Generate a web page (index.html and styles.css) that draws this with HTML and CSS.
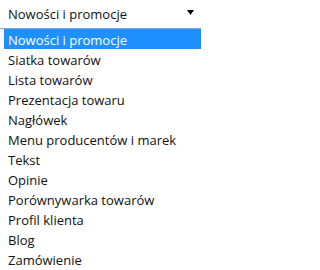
FILE: index.html
```html
<!DOCTYPE html>
<html lang="pl">
<head>
<meta charset="utf-8">
<link rel="stylesheet" href="styles.css">
</head>
<body>
<div class="page">
  <div class="select">
    <span class="value">Nowości i promocje</span>
    <svg class="arrow" width="7" height="5" viewBox="0 0 7 5"><path d="M0 0H7L3.5 5Z" fill="#000"/></svg>
  </div>
  <ul class="list">
    <li class="opt selected">Nowości i promocje</li>
    <li class="opt">Siatka towarów</li>
    <li class="opt">Lista towarów</li>
    <li class="opt">Prezentacja towaru</li>
    <li class="opt">Nagłówek</li>
    <li class="opt">Menu producentów i marek</li>
    <li class="opt">Tekst</li>
    <li class="opt">Opinie</li>
    <li class="opt">Porównywarka towarów</li>
    <li class="opt">Profil klienta</li>
    <li class="opt">Blog</li>
    <li class="opt">Zamówienie</li>
  </ul>
</div>
</body>
</html>
```
FILE: styles.css
```css
html, body {
  margin: 0;
  padding: 0;
  background: #fff;
}
body {
  font-family: "Open Sans", "Noto Sans", sans-serif;
  font-size: 13px;
  color: #111;
}
.page {
  width: 201px;
  height: 270px;
  overflow: hidden;
}
.select {
  height: 29px;
  display: flex;
  align-items: center;
  justify-content: space-between;
  padding: 0 7px 1px 8px;
  box-sizing: border-box;
  border-bottom: 1px solid #86a8d0;
}
.arrow {
  display: block;
  margin-bottom: 3px;
}
.list {
  list-style: none;
  margin: 0 0 0 4px;
  padding: 0;
}
.opt {
  height: 20px;
  line-height: 22px;
  padding-left: 4px;
  white-space: nowrap;
}
.opt.selected {
  background: #1e90ff;
  color: #fff;
}
```
